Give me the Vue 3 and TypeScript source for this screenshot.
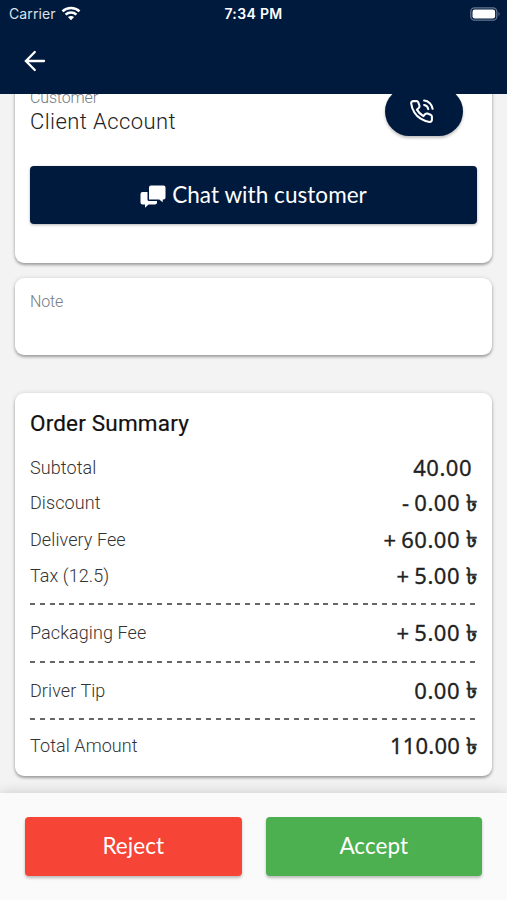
<script setup lang="ts">
interface SummaryRow {
  key: string
  label: string
  amount: string
  currency: boolean
  ruled: boolean
}

const rows: SummaryRow[] = [
  { key: 'subtotal', label: 'Subtotal', amount: '40.00', currency: false, ruled: false },
  { key: 'discount', label: 'Discount', amount: '- 0.00', currency: true, ruled: false },
  { key: 'delivery', label: 'Delivery Fee', amount: '+ 60.00', currency: true, ruled: false },
  { key: 'tax', label: 'Tax (12.5)', amount: '+ 5.00', currency: true, ruled: true },
  { key: 'packaging', label: 'Packaging Fee', amount: '+ 5.00', currency: true, ruled: true },
  { key: 'tip', label: 'Driver Tip', amount: '0.00', currency: true, ruled: true },
  { key: 'total', label: 'Total Amount', amount: '110.00', currency: true, ruled: false },
]
</script>

<template>
  <div class="screen">
    <header class="topbar">
      <div class="status">
        <div class="carrier">
          <span>Carrier</span>
          <svg width="20" height="15" viewBox="0 0 20 15" fill="none" stroke="#fff" stroke-width="2.5">
            <path d="M1.500 5.400C6.200.9 13.800.9 18.500 5.400" />
            <path d="M4.600 8.600C7.600 5.800 12.400 5.800 15.400 8.600" />
            <path d="M10 14.200L6.900 11.100C8.600 9.500 11.400 9.500 13.100 11.100Z" fill="#fff" stroke="none" />
          </svg>
        </div>
        <span class="time">7:34 PM</span>
        <svg class="battery" width="31" height="14" viewBox="0 0 31 14">
          <rect x=".8" y=".8" width="26" height="12.400" rx="3.800" fill="none" stroke="#66768e" stroke-width="1.300" />
          <rect x="2.500" y="2.500" width="22.600" height="9" rx="2.200" fill="#fff" />
          <path d="M28.500 4.800Q30.600 7 28.500 9.200Z" fill="#66768e" />
        </svg>
      </div>
      <svg class="back" width="22" height="22" viewBox="0 0 22 22" fill="none" stroke="#fff" stroke-width="2.300" stroke-linecap="round">
        <path d="M20 11H2.500M10.800 2L1.900 11l8.900 9" />
      </svg>
    </header>

    <main class="content">
      <section class="card customer">
        <div class="customer-head">
          <div>
            <div class="muted customer-label">Customer</div>
            <div class="name">Client Account</div>
          </div>
          <button class="call" aria-label="Call">
            <svg width="25" height="25" viewBox="0 0 24 24" fill="none" stroke="#fff" stroke-width="2" stroke-linecap="round" stroke-linejoin="round">
              <path d="M14.500 5.800A5 5 0 0 1 18.500 9.700M14.500 1.500A9 9 0 0 1 22.700 9.400" />
              <path d="M22 17v3a2 2 0 0 1-2.180 2 19.790 19.790 0 0 1-8.630-3.070 19.500 19.500 0 0 1-6-6A19.790 19.790 0 0 1 2.120 4.180 2 2 0 0 1 4.110 2H7a2 2 0 0 1 1.900 1.300l1.100 3a2 2 0 0 1-.45 2L7.600 10.200a16 16 0 0 0 6.200 6.200l1.900-1.900a2 2 0 0 1 2-.5l3 1.100A2 2 0 0 1 22 17z" />
            </svg>
          </button>
        </div>
        <button class="chat">
          <svg width="26" height="23" viewBox="0 0 26 23" fill="#fff">
            <path d="M2.500 7H7.500V14.500Q7.500 16 9 16H17V17.500Q17 19.500 15 19.500H8.500L5 22.700V19.500H2.500Q.5 19.500.5 17.500V9Q.5 7 2.500 7Z" />
            <path d="M11 .5H23.500Q25.500.5 25.500 2.500V12.500Q25.500 14.500 23.500 14.500H22.700V17.300L19.200 14.500H9V2.500Q9 .5 11 .5Z" />
          </svg>
          <span>Chat with customer</span>
        </button>
      </section>

      <section class="card note">
        <div class="muted">Note</div>
      </section>

      <section class="card summary">
        <h2>Order Summary</h2>
        <div v-for="row in rows" :key="row.key" class="row" :class="[row.key, { ruled: row.ruled }]">
          <span class="label">{{ row.label }}</span>
          <span class="amount">{{ row.amount }}<span v-if="row.currency" class="taka">৳</span></span>
        </div>
      </section>
    </main>

    <footer class="actions">
      <button class="reject">Reject</button>
      <button class="accept">Accept</button>
    </footer>
  </div>
</template>

<style>
body {
  background: #f3f3f3;
}
</style>

<style scoped>
* {
  box-sizing: border-box;
}
.screen {
  width: 507px;
  height: 900px;
  display: flex;
  flex-direction: column;
  overflow: hidden;
  background: #f3f3f3;
  font-family: Roboto, sans-serif;
}
button {
  border: 0;
  padding: 0;
  color: #fff;
  font-family: Lato, sans-serif;
  font-size: 22.500px;
  letter-spacing: 0.050px;
}
.topbar {
  height: 94px;
  flex: none;
  background: #001a3e;
  color: #fff;
}
.status {
  height: 27px;
  display: grid;
  grid-template-columns: 1fr auto 1fr;
  align-items: center;
  padding: 0 6px 0 9px;
  font-family: Inter, sans-serif;
  font-size: 14px;
}
.carrier {
  display: flex;
  align-items: center;
  gap: 5px;
  letter-spacing: 0.120px;
  color: #dce1e8;
}
.time {
  font-weight: 600;
  font-size: 14px;
  letter-spacing: 0.350px;
  padding-right: 3px;
}
.battery {
  justify-self: end;
}
.back {
  display: block;
  margin: 23px 0 0 24px;
}
.content {
  flex: 1;
  min-height: 0;
  padding: 0 15px;
  overflow: hidden;
}
.card {
  background: #fff;
  border-radius: 9px;
  padding: 0 15px;
  box-shadow: 0 2px 3px rgba(0, 0, 0, 0.32), 0 0 5px rgba(0, 0, 0, 0.1);
}
.muted {
  font-size: 16px;
  line-height: 20px;
  letter-spacing: -0.150px;
  color: #777b84;
  font-weight: 300;
}
.customer {
  height: 189px;
  margin-top: -20px;
}
.customer-head {
  display: flex;
  justify-content: space-between;
  height: 92px;
}
.customer-label {
  margin-top: 14px;
}
.name {
  font-size: 22px;
  line-height: 28px;
  font-weight: 300;
  letter-spacing: 0.420px;
  color: #222;
}
.call {
  width: 78px;
  height: 49px;
  margin: 13px 14px 0 0;
  border-radius: 25px;
  background: #001a3e;
  display: flex;
  align-items: center;
  justify-content: center;
  padding-right: 5px;
  box-shadow: 0 2px 3px rgba(0, 0, 0, 0.25);
}
.chat {
  width: 100%;
  height: 58px;
  border-radius: 4px;
  background: #001a3e;
  display: flex;
  align-items: center;
  justify-content: center;
  gap: 6px;
  box-shadow: 0 1px 3px rgba(0, 0, 0, 0.3);
}
.chat svg {
  margin-top: 2px;
}
.chat span {
  padding-bottom: 2px;
}
.note {
  height: 77px;
  margin-top: 15px;
  padding-top: 14px;
}
.summary {
  height: 383px;
  margin-top: 38px;
  padding-top: 15px;
}
h2 {
  margin: 0 0 11px;
  font-size: 22.500px;
  line-height: 30px;
  font-weight: 400;
  letter-spacing: 0.180px;
  color: #111;
  -webkit-text-stroke: 0.200px #111;
}
.row {
  height: 36px;
  display: flex;
  justify-content: space-between;
  align-items: center;
}
.label {
  font-size: 18px;
  font-weight: 300;
  letter-spacing: 0.080px;
  color: #333;
}
.amount {
  display: flex;
  align-items: center;
  height: 30px;
  margin-top: -1px;
  font-family: "Noto Sans", sans-serif;
  font-size: 22px;
  font-weight: 400;
  letter-spacing: 0.500px;
  word-spacing: -1.500px;
  -webkit-text-stroke: 0.300px #222;
  color: #222;
}
.subtotal .amount {
  padding-right: 5px;
}
.taka {
  position: relative;
  top: 2px;
  margin-left: 6px;
  letter-spacing: 0;
  font-size: 23px;
  -webkit-text-stroke: 0.650px #222;
}
.discount {
  height: 35px;
}
.delivery {
  height: 38px;
}
.ruled {
  height: 57.500px;
  padding-bottom: 2px;
  background: repeating-linear-gradient(90deg, #666 0 5px, transparent 5px 9.780px) left bottom / 100% 2px no-repeat;
}
.tax {
  height: 47px;
  padding-bottom: 12px;
}
.total {
  height: 52px;
  padding-bottom: 1px;
}
.total .amount {
  letter-spacing: 0.200px;
}
.actions {
  height: 107px;
  flex: none;
  display: flex;
  gap: 24px;
  padding: 24px 25px;
  background: #fafafa;
  box-shadow: 0 0 12px rgba(0, 0, 0, 0.18);
  z-index: 1;
}
.actions button {
  flex: 1;
  height: 59px;
  padding-bottom: 2px;
  border-radius: 4px;
  box-shadow: 0 2px 3px rgba(0, 0, 0, 0.25);
}
.reject {
  background: #f64537;
}
.accept {
  background: #4caf50;
}
</style>
